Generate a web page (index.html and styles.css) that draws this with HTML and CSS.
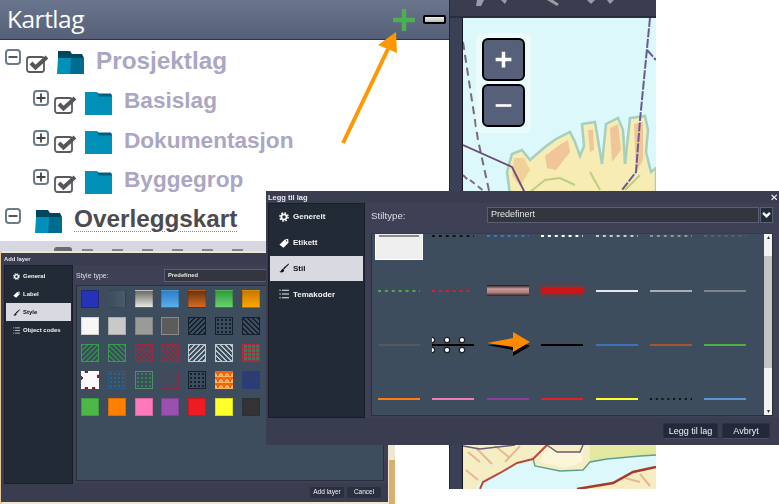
FILE: index.html
```html
<!DOCTYPE html>
<html lang="no">
<head>
<meta charset="utf-8">
<title>Kartlag</title>
<link rel="stylesheet" href="styles.css">
</head>
<body>
<svg class="defs" width="0" height="0" aria-hidden="true">
  <defs>
    <symbol id="i-gear" viewBox="0 0 12 12"><circle cx="6" cy="6" r="3.2" fill="none" stroke="currentColor" stroke-width="2.2"/><circle cx="6" cy="6" r="4.9" fill="none" stroke="currentColor" stroke-width="1.8" stroke-dasharray="1.9 1.95"/></symbol>
    <symbol id="i-tag" viewBox="0 0 12 12"><path d="M.5 8 6.5 2 11 1l.4 4.6-6 6z" fill="currentColor"/><circle cx="9" cy="3.3" r=".9" fill="#222b35"/></symbol>
    <symbol id="i-brush" viewBox="0 0 12 12"><path d="M11.500.5 4.800 6.200l1.400 1.400L12 1.400z" fill="currentColor"/><path d="M4.300 6.800C2.600 7.300 3.400 9.800.4 10.600c2.200 1.400 6.200.8 5.800-2.400z" fill="currentColor"/></symbol>
    <symbol id="i-list" viewBox="0 0 12 12"><path d="M3.500 1.500H12M3.500 6H12M3.500 10.500H12" stroke="currentColor" stroke-width="1.100" fill="none"/><path d="M.5 1h1.500v1.200H.5zM.5 5.400h1.500v1.200H.5zM.5 9.900h1.500v1.200H.5z" fill="currentColor"/></symbol>
    <symbol id="i-check" viewBox="0 0 23 19"><rect x="1" y="3" width="17" height="15" rx="2.500" fill="#fff" stroke="#5a5a5e" stroke-width="1.800"/><path d="M5 9 9.500 13.500 21 3" fill="none" stroke="#55555a" stroke-width="4"/></symbol>
    <symbol id="i-minus" viewBox="0 0 16 16"><rect x="1" y="1" width="14" height="14" rx="3" fill="#fff" stroke="#6b7b8c" stroke-width="2"/><path d="M3.500 8h9" stroke="#444" stroke-width="1.800"/></symbol>
    <symbol id="i-plus" viewBox="0 0 16 16"><rect x="1" y="1" width="14" height="14" rx="3" fill="#fff" stroke="#6b7b8c" stroke-width="2"/><path d="M3.500 8h9M8 3.500v9" stroke="#444" stroke-width="1.800"/></symbol>
    <symbol id="i-folder" viewBox="0 0 27 23"><path d="M0 23V0h12l2 2h12l1 2v19z" fill="#0090b8"/><path d="M12 1.500h14l1 3H14z" fill="#005f80"/></symbol>
    <symbol id="i-folder-open" viewBox="0 0 27 23"><path d="M0 23 1 7h26v16z" fill="#0090b8"/><path d="M14 7h13v16H13z" fill="#006c90"/><path d="M1 7V0h12l2 3h10l2 4z" fill="#00465e"/></symbol>
  </defs>
</svg>

<main class="canvas">
  <div class="backdrop"></div>

  <section class="layers">
    <header class="layers-head">
      <h1 class="layers-title">Kartlag</h1>
      <div class="layers-tools">
        <svg class="tool-add" viewBox="0 0 24 24"><path d="M12 1v22M1 12h22" stroke="#4caf50" stroke-width="4.500"/></svg>
        <span class="tool-remove"></span>
      </div>
    </header>
    <ul class="tree">
      <li class="node node-top">
        <svg class="exp"><use href="#i-minus"/></svg>
        <svg class="chk"><use href="#i-check"/></svg>
        <svg class="fld"><use href="#i-folder-open"/></svg>
        <span class="lbl lbl-top">Prosjektlag</span>
      </li>
      <li class="node node-sub">
        <svg class="exp"><use href="#i-plus"/></svg>
        <svg class="chk"><use href="#i-check"/></svg>
        <svg class="fld"><use href="#i-folder"/></svg>
        <span class="lbl">Basislag</span>
      </li>
      <li class="node node-sub">
        <svg class="exp"><use href="#i-plus"/></svg>
        <svg class="chk"><use href="#i-check"/></svg>
        <svg class="fld"><use href="#i-folder"/></svg>
        <span class="lbl">Dokumentasjon</span>
      </li>
      <li class="node node-sub">
        <svg class="exp"><use href="#i-plus"/></svg>
        <svg class="chk"><use href="#i-check"/></svg>
        <svg class="fld"><use href="#i-folder"/></svg>
        <span class="lbl">Byggegrop</span>
      </li>
      <li class="node node-overlay">
        <svg class="exp"><use href="#i-minus"/></svg>
        <svg class="fld"><use href="#i-folder-open"/></svg>
        <span class="lbl lbl-overlay">Overleggskart</span>
      </li>
      <li class="node-sel"><span class="sel-check"></span><span class="sel-scraps"></span></li>
    </ul>
  </section>

  <section class="mapwin">
    <div class="map-bar">
      <svg class="map-tools" viewBox="0 0 206 6"><path d="M27 0h7l-3 6h-5zM51 0l4 4 2-4zM97 0l10 6 2-2-6-4zM137 0l4 4 4-4zM157 0l3 4 4-4z" fill="#9b9ba3"/></svg>
    </div>
    <div class="map-view">
      <svg class="map-svg" viewBox="463 18 193 471" preserveAspectRatio="none">
        <rect x="463" y="18" width="193" height="471" fill="#dcf8fb"/>
        <path d="M510 195 507 172 512 154 522 150 530 160 545 147 556 139 570 132 575 142 580 156 584 146 582 124 595 122 598 140 602 164 606 124 618 118 623 130 625 164 630 118 645 116 648 130 646 152 651 172 656 168V195z" fill="#f6ecb4" stroke="#a5cfbe" stroke-width="2.500"/>
        <path d="M545 156 558 146 568 140 570 152 556 170 547 168zM588 130 593 130 594 150 590 152zM610 128 618 124 621 150 612 162zM634 124 643 122 643 160 636 172z" fill="#ecb890" opacity=".75"/>
        <path d="M514 158 524 158 530 170 520 186 512 176z" fill="#eeca92" opacity=".8"/>
        <path d="M530 192 545 180 560 178 575 185M590 172 600 190M625 190 640 175" stroke="#bcd080" fill="none" stroke-width="2"/>
        <path d="M650 18 640 120 636 172 622 190M647 50 656 60" fill="none" stroke="#6a5a94" stroke-width="2" stroke-dasharray="9 1.500"/>
        <path d="M463 42 478 140 490 195" fill="none" stroke="#7a6a7a" stroke-width="2" stroke-dasharray="8 5"/>
        <path d="M463 145 512 167 526 195" fill="none" stroke="#6a4a78" stroke-width="1.800"/>
        <path d="M463 175 468 180M470 180 485 192" fill="none" stroke="#8a6a7a" stroke-width="2" stroke-dasharray="6 4"/>

        <rect x="463" y="440" width="193" height="49" fill="#f5eec4"/>
        <path d="M590 440 656 440V455L607 459 590 462z" fill="#e2e8a0"/>
        <path d="M468 452 480 462M476 448 492 464M495 446 510 458M520 446 505 462M466 470 478 480M625 478 640 482M640 474 650 486M600 486 615 480" stroke="#e8b890" stroke-width="2" fill="none"/>
        <path d="M547 446 557 452 580 452 584 446 582 462 565 468 540 462z" fill="#fbf6d8"/>
        <path d="M475 489 482 481 500 473 517 463 533 459 535 466 560 471 583 470 590 462 607 459 640 456 656 455V467L633 472 613 483 577 489z" fill="#dcf8fb"/>
        <path d="M533 459 535 466 560 471 583 470 590 462 607 459 640 456 656 455" fill="none" stroke="#5f9f8c" stroke-width="1.400"/>
        <path d="M480 489 483 482 500 473 517 463 533 459 547 445" fill="none" stroke="#b84a3c" stroke-width="2"/>
        <path d="M656 467 633 472 613 483 577 489" fill="none" stroke="#a8382c" stroke-width="2.500"/>
        <path d="M547 445 557 452 580 452 583 445M463 446 480 449 515 445" fill="none" stroke="#6a5a70" stroke-width="1.500"/>
      </svg>
      <div class="zoom-pad">
        <button class="zoom-btn" type="button"><svg viewBox="0 0 24 24"><path d="M12 3v18M3 12h18" stroke="#fff" stroke-width="4"/></svg></button>
        <button class="zoom-btn" type="button"><svg viewBox="0 0 24 24"><path d="M3 12h18" stroke="#fff" stroke-width="3"/></svg></button>
      </div>
    </div>
  </section>

  <svg class="callout" viewBox="0 0 70 120"><path d="M3 115 48 21" stroke="#ff9800" stroke-width="4" fill="none"/><path d="M56 4 38 17 57 25z" fill="#ff9800"/></svg>

  <section class="dialog dialog-add">
    <header class="dlg-title">Add layer</header>
    <div class="dlg-body">
      <nav class="dlg-nav">
        <a class="nav-item"><svg class="nav-ico"><use href="#i-gear"/></svg>General</a>
        <a class="nav-item"><svg class="nav-ico"><use href="#i-tag"/></svg>Label</a>
        <a class="nav-item nav-on"><svg class="nav-ico"><use href="#i-brush"/></svg>Style</a>
        <a class="nav-item"><svg class="nav-ico"><use href="#i-list"/></svg>Object codes</a>
      </nav>
      <div class="dlg-main">
        <div class="style-row">
          <span class="style-label">Style type:</span>
          <span class="style-select">Predefined</span>
        </div>
        <div class="fills">
          <i class="f f-blue"></i><i class="f f-slate"></i><i class="f f-grey"></i><i class="f f-sky"></i><i class="f f-brown"></i><i class="f f-green"></i><i class="f f-amber"></i>
          <i class="f f-white"></i><i class="f f-l1"></i><i class="f f-l2"></i><i class="f f-l3"></i><i class="f f-dk f-ha"></i><i class="f f-dk f-dots"></i><i class="f f-dk f-hb"></i>
          <i class="f f-gr f-ha"></i><i class="f f-gr f-hb"></i><i class="f f-rd f-ha"></i><i class="f f-rd f-hb"></i><i class="f f-wh f-ha"></i><i class="f f-wh f-hb"></i><i class="f f-grid"></i>
          <i class="f f-stamp"></i><i class="f f-bl f-dots"></i><i class="f f-gr f-dots"></i><i class="f f-corner"></i><i class="f f-dk f-dots"></i><i class="f f-hearts"></i><i class="f f-navy"></i>
          <i class="f f-s1"></i><i class="f f-s2"></i><i class="f f-s3"></i><i class="f f-s4"></i><i class="f f-s5"></i><i class="f f-s6"></i><i class="f f-s7"></i>
        </div>
      </div>
    </div>
    <footer class="dlg-foot dlg-foot-add">
      <button class="btn" type="button">Add layer</button>
      <button class="btn" type="button">Cancel</button>
    </footer>
  </section>

  <section class="dialog dialog-main">
    <header class="dlg-title">Legg til lag<span class="dlg-close">✕</span></header>
    <div class="dlg-body">
      <nav class="dlg-nav">
        <a class="nav-item"><svg class="nav-ico"><use href="#i-gear"/></svg>Generelt</a>
        <a class="nav-item"><svg class="nav-ico"><use href="#i-tag"/></svg>Etikett</a>
        <a class="nav-item nav-on"><svg class="nav-ico"><use href="#i-brush"/></svg>Stil</a>
        <a class="nav-item"><svg class="nav-ico"><use href="#i-list"/></svg>Temakoder</a>
      </nav>
      <div class="dlg-main">
        <div class="style-row">
          <span class="style-label">Stiltype:</span>
          <span class="style-select">Predefinert</span>
          <span class="style-caret"><svg viewBox="0 0 10 7"><path d="M0 2 2 0 5 3 8 0 10 2 5 7z" fill="#fff"/></svg></span>
        </div>
        <div class="lines-wrap">
          <div class="lines">
            <div class="c"><div class="sel-box"><b class="l l-g1"></b></div></div>
            <div class="c"><b class="d d-k"></b></div>
            <div class="c"><b class="d d-b"></b></div>
            <div class="c"><b class="d d-w"></b></div>
            <div class="c"><b class="d d-w2"></b></div>
            <div class="c"><b class="d d-w3"></b></div>
            <div class="c"><b class="d d-w4"></b></div>

            <div class="c"><b class="d d-gr"></b></div>
            <div class="c"><b class="d d-rd"></b></div>
            <div class="c"><b class="band"></b></div>
            <div class="c"><b class="glow"></b></div>
            <div class="c"><b class="l l-w"></b></div>
            <div class="c"><b class="l l-g2"></b></div>
            <div class="c"><b class="l l-g3"></b></div>

            <div class="c"><b class="l l-g4"></b></div>
            <div class="c"><svg class="ring" viewBox="0 0 42 20"><path d="M0 10h42" stroke="#000" stroke-width="2"/><g fill="#fff" stroke="#222" stroke-width="1.300"><circle cx="0" cy="5" r="2.700"/><circle cx="15" cy="5" r="2.700"/><circle cx="30" cy="5" r="2.700"/><circle cx="0" cy="15" r="2.700"/><circle cx="15" cy="15" r="2.700"/><circle cx="30" cy="15" r="2.700"/></g></svg></div>
            <div class="c"><svg class="arrowline" viewBox="0 0 44 26"><path d="M0 13 26 12V7L43 14 26 24V18z" fill="#000"/><path d="M0 11 26 6V0L43 10 26 20V15z" fill="#ff8a00"/></svg></div>
            <div class="c"><b class="l l-k"></b></div>
            <div class="c"><b class="l l-bl"></b></div>
            <div class="c"><b class="l l-br"></b></div>
            <div class="c"><b class="l l-gn"></b></div>

            <div class="c"><b class="l l-or"></b></div>
            <div class="c"><b class="l l-pk"></b></div>
            <div class="c"><b class="l l-pu"></b></div>
            <div class="c"><b class="l l-re"></b></div>
            <div class="c"><b class="l l-ye"></b></div>
            <div class="c"><b class="d d-sm"></b></div>
            <div class="c"><b class="l l-sk"></b></div>
          </div>
          <div class="scroll">
            <span class="scroll-cap">▴</span>
            <span class="scroll-thumb"></span>
            <span class="scroll-rest"></span>
            <span class="scroll-end">▾</span>
          </div>
        </div>
      </div>
    </div>
    <footer class="dlg-foot">
      <button class="btn" type="button">Legg til lag</button>
      <button class="btn" type="button">Avbryt</button>
    </footer>
  </section>
</main>
</body>
</html>
```
FILE: styles.css
```css
* { box-sizing: border-box; }
html, body { margin: 0; padding: 0; background: #fff; }
.defs { display: block; height: 0; }

/* The screenshot is a collage: each window sits on a free canvas. */
.canvas {
  position: relative;
  width: 779px;
  height: 504px;
  overflow: hidden;
  background: #fff;
  font-family: "Liberation Sans", Arial, sans-serif;
}

.backdrop {
  position: absolute;
  left: 0;
  top: 251px;
  width: 395px;
  height: 253px;
  background:
    linear-gradient(#d8b070, #d8b070) right 0 bottom / 6px 44px no-repeat,
    linear-gradient(90deg, #e6c48e 0, #efe6d2 3px, #efe6d2 393px);
}

/* Layer tree */
.layers {
  position: absolute;
  left: 0;
  top: 0;
  width: 449px;
  height: 251px;
  background: #fff;
  overflow: hidden;
}
.layers-head {
  height: 40px;
  display: flex;
  align-items: center;
  justify-content: space-between;
  padding: 0 3px 0 7px;
  background: linear-gradient(#6a758e, #556078);
  border-bottom: 1px solid #2e3346;
}
.layers-title {
  margin: 0;
  font: 400 24.500px/1 "Open Sans", sans-serif;
  letter-spacing: -.5px;
  color: #fff;
}
.layers-tools { display: flex; align-items: center; gap: 7px; }
.tool-add { width: 24px; height: 24px; display: block; }
.tool-remove {
  width: 23px;
  height: 9px;
  border: 2px solid #000;
  border-radius: 2px;
  background: linear-gradient(#eee, #bbb);
}
.tree { list-style: none; margin: 0; padding: 1px 0 0; }
.node { height: 39.500px; display: flex; align-items: center; padding-left: 5px; }
.node-top { margin-bottom: 1.500px; }
.node-sub { padding-left: 33px; }
.exp { width: 16px; height: 16px; flex: none; margin-bottom: 7px; }
.chk { width: 23px; height: 19px; flex: none; margin: 5px 0 0 5px; }
.fld { width: 27px; height: 23px; flex: none; margin: 3px 0 0 8px; }
.lbl { margin-left: 12px; font-weight: 700; font-size: 22.600px; color: #aba6c4; line-height: 1; }
.lbl-top { font-size: 24.300px; }
.node-overlay { margin-top: -1px; }
.node-overlay .fld { margin: 5px 0 0 14px; }
.lbl-overlay {
  font-size: 24.300px;
  color: #4b4b50;
  text-decoration: underline dotted #8a8a8a 1px;
  text-underline-offset: 4px;
}
.node-sel {
  height: 10px;
  margin-top: 1.500px;
  display: flex;
  align-items: flex-end;
  padding-left: 54px;
  background: #d6d7e0;
}
.sel-check { width: 18px; height: 4px; background: #6a6a70; border-radius: 3px 3px 0 0; }
.sel-scraps {
  width: 170px;
  height: 2px;
  margin-left: 10px;
  background: repeating-linear-gradient(90deg, #85858c 0 11px, transparent 11px 30px);
}

/* Map window */
.mapwin {
  position: absolute;
  left: 449px;
  top: 0;
  width: 207px;
  height: 489px;
  display: flex;
  flex-direction: column;
  background: #3a4056;
  border-left: 1px solid #23273a;
}
.map-bar {
  height: 18px;
  flex: none;
  background: #3a3c50;
  border-bottom: 2px solid #2a2c3c;
}
.map-tools { display: block; width: 206px; height: 6px; }
.map-view {
  flex: 1;
  margin-left: 12px;
  border-left: 1px solid #15171f;
  position: relative;
  overflow: hidden;
}
.map-svg { display: block; width: 100%; height: 100%; filter: blur(.7px); }
.zoom-pad {
  position: absolute;
  left: 13px;
  top: 15px;
  width: 55px;
  height: 100px;
  padding: 5px 6px;
  display: flex;
  flex-direction: column;
  gap: 3px;
  background: rgba(255, 255, 255, .4);
  border-radius: 6px;
}
.zoom-btn {
  width: 43px;
  height: 43px;
  padding: 9px;
  display: block;
  background: #566079;
  border: 2px solid #000;
  border-radius: 6px;
}
.zoom-btn svg { display: block; width: 100%; height: 100%; }

.callout { position: absolute; left: 340px; top: 28px; width: 70px; height: 120px; }

/* Dialogs */
.dialog {
  position: absolute;
  display: flex;
  flex-direction: column;
  color: #fff;
  background: #3a3c50;
  filter: blur(.3px);
}
.dialog-main { left: 266px; top: 191px; width: 513px; height: 254px; }
.dialog-add { left: 1px; top: 253px; width: 387px; height: 249px; filter: blur(.55px); }

.dlg-title {
  height: 12px;
  flex: none;
  padding-left: 2px;
  display: flex;
  align-items: center;
  justify-content: space-between;
  font-size: 7.500px;
  font-weight: 700;
  color: #e8e8ee;
}
.dlg-close { padding-right: 1px; font-size: 10px; font-weight: 400; color: #fff; }
.dlg-body { flex: 1; display: flex; min-height: 0; padding-left: 2px; }
.dlg-foot {
  height: 27px;
  flex: none;
  display: flex;
  align-items: center;
  justify-content: flex-end;
  gap: 4px;
  padding: 0 9px 1px 0;
}
.btn {
  height: 16px;
  padding: 0;
  width: 48px;
  font: 400 9px/1 "Liberation Sans", sans-serif;
  color: #f0f0f4;
  background: #23293a;
  border: 1px solid #2c3040;
  border-bottom-color: #4a4e60;
  border-radius: 2px;
}
.btn:first-child { width: 55px; }

.dlg-nav {
  flex: none;
  width: 97px;
  padding-top: 0;
  background: #222b35;
  border: 1px solid #1b1e29;
  display: flex;
  flex-direction: column;
}
.nav-item {
  height: 25.800px;
  margin: 0 1px;
  padding-left: 9px;
  display: flex;
  align-items: center;
  gap: 4px;
  font-size: 8px;
  font-weight: 700;
  color: #f2f2f2;
}
.nav-ico { width: 10px; height: 10px; flex: none; color: #fff; }
.nav-on { color: #111; background: #d9d9e2; }
.nav-on .nav-ico { color: #111; }

.dlg-main {
  flex: 1;
  min-width: 0;
  display: flex;
  flex-direction: column;
  padding: 0 6px 0 6px;
  background: #3e4156;
}
.style-row { height: 30px; flex: none; display: flex; align-items: center; padding-bottom: 6px; }
.style-label { width: 116px; font-size: 9.700px; color: #dcdce2; }
.style-select {
  flex: 1;
  height: 16px;
  padding-left: 3px;
  font-size: 9px;
  line-height: 13px;
  color: #e6e6e6;
  background: #33363e;
  border: 1px solid #5a6074;
}
.style-caret {
  width: 13px;
  height: 16px;
  margin-left: 1px;
  padding: 4px 1px;
  background: #232a3a;
  border: 1px solid #5a6074;
}
.style-caret svg { display: block; width: 100%; height: 100%; }

.lines-wrap {
  height: 183px;
  flex: none;
  display: flex;
  background: #3d4d5d;
  border: 1px solid #2b2e3c;
  border-top-color: #333a48;
  overflow: hidden;
}
.lines {
  flex: 1;
  min-width: 0;
  display: grid;
  grid-template-columns: repeat(7, 42px);
  grid-auto-rows: 54.400px;
  column-gap: 12.400px;
  margin-top: -25px;
  padding-left: 6px;
}
.c { display: flex; align-items: center; min-width: 0; }
.sel-box {
  flex: none;
  width: 48px;
  height: 48px;
  margin-left: -3px;
  padding: 0 3px;
  display: flex;
  align-items: center;
  background: #efefef;
  border: 1px solid #fff;
}
.sel-box .l { width: 100%; }
.l { display: block; width: 42px; height: 2px; }
.l-g1 { background: #8a8a8a; }
.l-w { background: #e8e8e8; }
.l-g2 { background: #aab0b2; }
.l-g3 { background: #7f8486; }
.l-g4 { background: #55585c; }
.l-k { background: #000; }
.l-bl { background: #3d72b4; }
.l-br { background: #a8552a; }
.l-gn { background: #4cb040; }
.l-or { background: #ff7d10; }
.l-pk { background: #f07cc0; }
.l-pu { background: #8a3fa0; }
.l-re { background: #e0202c; }
.l-ye { background: #ffff30; }
.l-sk { background: #5b96d8; }
.d { display: block; width: 42px; height: 2px; background-size: 6.900px 2px; background-repeat: repeat-x; }
.d-k { background-image: linear-gradient(90deg, #111 3px, transparent 3px); }
.d-b { background-image: linear-gradient(90deg, #3d78b8 3px, transparent 3px); }
.d-w { background-image: linear-gradient(90deg, #fff 3px, transparent 3px); }
.d-w2 { background-image: linear-gradient(90deg, #c6cacc 3px, transparent 3px); }
.d-w3 { background-image: linear-gradient(90deg, #8f9498 3px, transparent 3px); }
.d-w4 { background-image: linear-gradient(90deg, #586068 3px, transparent 3px); }
.d-gr { background-image: linear-gradient(90deg, #4cb040 3px, transparent 3px); }
.d-rd { background-image: linear-gradient(90deg, #d8202c 3px, transparent 3px); }
.d-sm { background-image: linear-gradient(90deg, #111 2px, transparent 2px); background-size: 5.800px 2px; }
.band { display: block; width: 42px; height: 11px; background: linear-gradient(#1a1212, #c89a9a 35%, #a87a7a 70%, #2a1c1c); }
.glow { display: block; width: 42px; height: 7px; background: #cc1616; box-shadow: 0 0 4px 1px rgba(204, 22, 22, .55); }
.ring { display: block; width: 42px; height: 20px; flex: none; overflow: hidden; }
.arrowline { display: block; width: 44px; height: 26px; flex: none; margin-top: 1px; }

.scroll { width: 8px; flex: none; display: flex; flex-direction: column; background: #f2f2f2; font-size: 6px; line-height: 6px; color: #333; text-align: center; }
.scroll-cap { height: 22px; }
.scroll-thumb { height: 112px; background: #c4c4c4; }
.scroll-rest { flex: 1; }
.scroll-end { height: 7px; }

/* Add layer dialog */
.dialog-add .dlg-title { font-size: 5.800px; height: 12px; padding-left: 3px; }
.dialog-add .dlg-body { padding-left: 3px; }
.dialog-add .dlg-nav { width: 69px; padding-top: 1px; height: 219px; }
.dialog-add .nav-item { height: 18px; padding-left: 7px; gap: 3px; font-size: 6px; }
.dialog-add .nav-ico { width: 7px; height: 7px; }
.dialog-add .dlg-main { padding: 0 4px 0 3px; }
.dialog-add .style-row { height: 20px; padding: 0; }
.dialog-add .style-label { width: 88px; font-size: 7px; font-weight: 400; }
.dialog-add .style-select { height: 13px; flex: 1; font-size: 5.800px; line-height: 10px; font-weight: 700; }
.fills {
  height: 196px;
  padding: 4px 0 0 4px;
  display: grid;
  grid-template-columns: repeat(7, 18px);
  grid-auto-rows: 18px;
  gap: 9px 8.800px;
  background: #3d4d5d;
  border: 1px solid #2b2e3c;
}
.dlg-foot-add { height: 19px; padding: 0 7px 0 0; gap: 3px; }
.dlg-foot-add .btn, .dlg-foot-add .btn:first-child { width: 34px; height: 11px; font-size: 6.500px; background: #2a3040; border: 0; }

.f { display: block; border: 1px solid rgba(0, 0, 0, .15); }
.f-blue { background: #2433b8; border-color: #1d2a78; }
.f-slate { background: linear-gradient(90deg, #3c4e5e, #4a5c6c); }
.f-grey { background: linear-gradient(#6a6a66, #e8e8e4); }
.f-sky { background: linear-gradient(#2f7fc8, #58aeea); }
.f-brown { background: linear-gradient(#6c3410, #d86a20); }
.f-green { background: linear-gradient(#2e9a3c, #6ad46c); }
.f-amber { background: linear-gradient(#c87800, #ffa800); }
.f-white { background: #f7f7f7; }
.f-l1 { background: #c9c9c9; }
.f-l2 { background: #9a9a9a; }
.f-l3 { background: #5c5c5c; border-color: #8a8a8a; }
.f-ha, .f-hb, .f-dots { background-color: #3d4d5d; }
.f-dk { --ink: #15202e; border-color: #15202e; }
.f-gr { --ink: #2f8a48; border-color: #3a9a50; }
.f-rd { --ink: #9a2a40; border-color: #9a2a40; }
.f-wh { --ink: #b8c0c8; border-color: #c0c8d0; }
.f-bl { --ink: #2c6490; border-color: #2c5a80; }
.f-ha { background-image: repeating-linear-gradient(135deg, var(--ink) 0 1px, transparent 1px 3.500px); }
.f-hb { background-image: repeating-linear-gradient(45deg, var(--ink) 0 1px, transparent 1px 3.500px); }
.f-dots { background-image: radial-gradient(var(--ink) 1px, transparent 1.300px); background-size: 4px 4px; }
.f-gr.f-dots { border-color: #5a8a70; }
.f-grid {
  border: 1px solid #b02a3c;
  background-color: #3a7a58;
  background-image: repeating-linear-gradient(90deg, #a03040 0 1px, transparent 1px 4px), repeating-linear-gradient(0deg, #a03040 0 1px, transparent 1px 4px);
}
.f-stamp {
  border: 0;
  background:
    radial-gradient(circle 2px at 0 40%, #8a1a30 95%, transparent),
    radial-gradient(circle 2px at 100% 30%, #8a1a30 95%, transparent),
    radial-gradient(circle 2px at 30% 0, #8a1a30 95%, transparent),
    radial-gradient(circle 2px at 70% 100%, #8a1a30 95%, transparent),
    radial-gradient(circle 2px at 30% 100%, #8a1a30 95%, transparent),
    #fafafa;
}
.f-corner { border-style: solid; border-color: transparent #8a2a44 #8a2a44 transparent; border-width: 0 1px 1px 0; background: radial-gradient(#5a4058 .6px, transparent 1px) 0 0 / 4px 4px; }
.f-hearts {
  border: 0;
  background: conic-gradient(from -30deg at 50% 100%, #f2640a 60deg, transparent 0) 0 0 / 6px 6px, #ffb060;
}
.f-navy { background: #2c3c74; border-color: transparent; }
.f-s1 { background: #4cb848; }
.f-s2 { background: #ff8000; }
.f-s3 { background: #ff78bd; }
.f-s4 { background: #9b4fb0; }
.f-s5 { background: #ed1c24; }
.f-s6 { background: #ffff2a; }
.f-s7 { background: #333; border-color: #2a2f38; }
```
